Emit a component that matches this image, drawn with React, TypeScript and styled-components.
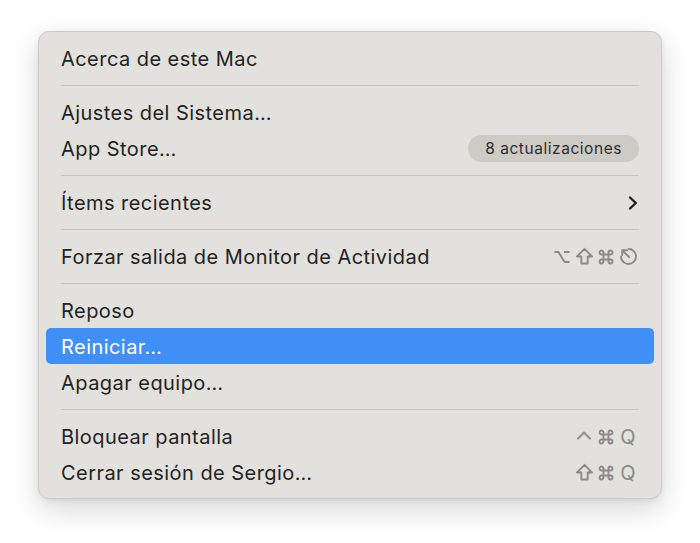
import React from "react";
import styled, { createGlobalStyle } from "styled-components";

const GlobalStyle = createGlobalStyle`
  html, body {
    margin: 0;
    padding: 0;
    background: #ffffff;
  }
  body {
    font-family: Inter, "Noto Sans", "Liberation Sans", sans-serif;
    -webkit-font-smoothing: antialiased;
  }
`;

const Stage = styled.div`
  min-height: 543px;
  box-sizing: border-box;
  padding: 31px 0 0 38px;
`;

const Menu = styled.div`
  width: 624px;
  box-sizing: border-box;
  padding: 8px 7px 8px;
  background: #e3e1dd;
  border: 1px solid #cdcbc7;
  border-radius: 11px;
  box-shadow: 0 10px 28px rgba(0, 0, 0, 0.16), 0 2px 6px rgba(0, 0, 0, 0.06);
  display: flex;
  flex-direction: column;
`;

const Row = styled.div<{ $active?: boolean }>`
  height: 36px;
  display: flex;
  align-items: center;
  justify-content: space-between;
  padding: 1px 15px 0;
  box-sizing: border-box;
  border-radius: 5px;
  font-size: 20px;
  letter-spacing: 0.45px;
  color: ${(p) => (p.$active ? "#ffffff" : "#232323")};
  background: ${(p) => (p.$active ? "#3f8ff7" : "transparent")};
`;

const Separator = styled.div`
  height: 18px;
  display: flex;
  align-items: center;
  padding: 0 15px;

  &::after {
    content: "";
    flex: 1;
    height: 1px;
    background: #c8c6c2;
  }
`;

const Badge = styled.span`
  height: 27px;
  padding: 0 17px;
  border-radius: 14px;
  background: #cecbc7;
  color: #2e2e2e;
  font-size: 15.5px;
  letter-spacing: 0.55px;
  display: flex;
  align-items: center;
`;

const Keys = styled.span`
  display: flex;
  align-items: center;
  color: #8b8a88;
`;

const Key = styled.span`
  width: 22px;
  display: flex;
  justify-content: center;
  align-items: center;
`;

const Letter = styled(Key)`
  font-size: 20px;
  letter-spacing: 0;
`;

const Glyph = styled.svg`
  display: block;
`;

const Chevron = () => (
  <Glyph width="12" height="16" viewBox="0 0 12 16">
    <path
      d="M3 2.5 L8.8 8 L3 13.5"
      fill="none"
      stroke="#1e1e1e"
      strokeWidth="2.4"
      strokeLinecap="round"
      strokeLinejoin="round"
    />
  </Glyph>
);

const OptionIcon = () => (
  <Glyph width="18" height="16" viewBox="0 0 18 16">
    <path
      d="M1.5 3 H5.5 L11.5 13 H16.5 M11 3 H16.5"
      fill="none"
      stroke="currentColor"
      strokeWidth="1.9"
      strokeLinejoin="round"
    />
  </Glyph>
);

const ShiftIcon = () => (
  <Glyph width="19" height="19" viewBox="0 0 19 19">
    <path
      d="M9.5 1.8 L17 9.5 H12.7 V16.5 H6.3 V9.5 H2 Z"
      fill="none"
      stroke="currentColor"
      strokeWidth="1.9"
      strokeLinejoin="round"
    />
  </Glyph>
);

const CommandIcon = () => (
  <Glyph width="18" height="18" viewBox="0 0 18 18">
    <path
      d="M6.5 6.5 V4.5 A2 2 0 1 0 4.5 6.5 H13.5 A2 2 0 1 0 11.5 4.5 V13.5 A2 2 0 1 0 13.5 11.5 H4.5 A2 2 0 1 0 6.5 13.5 Z"
      fill="none"
      stroke="currentColor"
      strokeWidth="1.8"
      strokeLinejoin="round"
    />
  </Glyph>
);

const ControlIcon = () => (
  <Glyph width="18" height="18" viewBox="0 0 18 18">
    <path
      d="M3 10.5 L9 4.5 L15 10.5"
      fill="none"
      stroke="currentColor"
      strokeWidth="1.9"
      strokeLinecap="round"
      strokeLinejoin="round"
    />
  </Glyph>
);

const EscapeIcon = () => (
  <Glyph width="19" height="19" viewBox="0 0 19 19">
    <path
      d="M9.5 2 A7.5 7.5 0 1 1 2 9.5"
      fill="none"
      stroke="currentColor"
      strokeWidth="1.9"
      strokeLinecap="round"
    />
    <path
      d="M10 10 L3.5 3.5 M3.2 8 V3.2 H8"
      fill="none"
      stroke="currentColor"
      strokeWidth="1.9"
      strokeLinecap="round"
      strokeLinejoin="round"
    />
  </Glyph>
);

export default function App() {
  return (
    <>
      <GlobalStyle />
      <Stage>
        <Menu>
          <Row>Acerca de este Mac</Row>
          <Separator />
          <Row>Ajustes del Sistema…</Row>
          <Row>
            App Store…
            <Badge>8 actualizaciones</Badge>
          </Row>
          <Separator />
          <Row>
            Ítems recientes
            <Chevron />
          </Row>
          <Separator />
          <Row>
            Forzar salida de Monitor de Actividad
            <Keys>
              <Key>
                <OptionIcon />
              </Key>
              <Key>
                <ShiftIcon />
              </Key>
              <Key>
                <CommandIcon />
              </Key>
              <Key>
                <EscapeIcon />
              </Key>
            </Keys>
          </Row>
          <Separator />
          <Row>Reposo</Row>
          <Row $active>Reiniciar…</Row>
          <Row>Apagar equipo…</Row>
          <Separator />
          <Row>
            Bloquear pantalla
            <Keys>
              <Key>
                <ControlIcon />
              </Key>
              <Key>
                <CommandIcon />
              </Key>
              <Letter>Q</Letter>
            </Keys>
          </Row>
          <Row>
            Cerrar sesión de Sergio…
            <Keys>
              <Key>
                <ShiftIcon />
              </Key>
              <Key>
                <CommandIcon />
              </Key>
              <Letter>Q</Letter>
            </Keys>
          </Row>
        </Menu>
      </Stage>
    </>
  );
}
